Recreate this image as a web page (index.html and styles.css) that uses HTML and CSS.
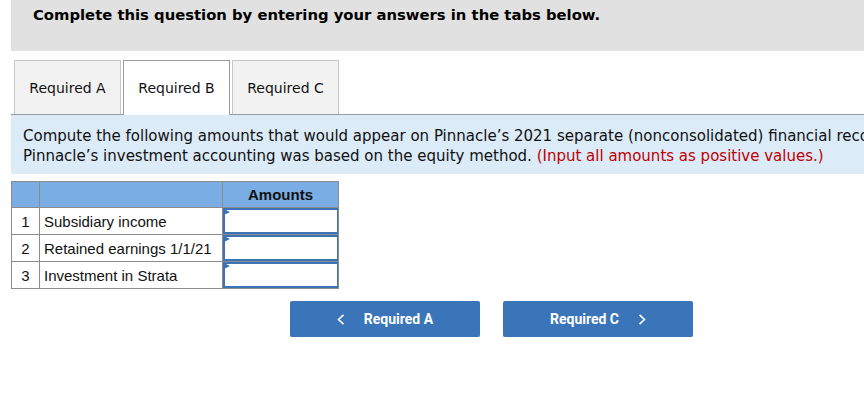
FILE: index.html
```html
<!DOCTYPE html>
<html>
<head>
<meta charset="utf-8">
<link rel="stylesheet" href="styles.css">
</head>
<body>
<div class="page">
  <div class="banner">Complete this question by entering your answers in the tabs below.</div>
  <div class="tabs">
    <div class="tab">Required A</div>
    <div class="tab active">Required B</div>
    <div class="tab">Required C</div>
  </div>
  <div class="info">
    Compute the following amounts that would appear on Pinnacle’s 2021 separate (nonconsolidated) financial records if<br>
    Pinnacle’s investment accounting was based on the equity method. <span class="red">(Input all amounts as positive values.)</span>
  </div>
  <table class="grid">
    <tr class="head">
      <th class="num"></th>
      <th class="label"></th>
      <th class="amt">Amounts</th>
    </tr>
    <tr>
      <td class="num">1</td>
      <td class="label">Subsidiary income</td>
      <td class="amt"><div class="input"></div></td>
    </tr>
    <tr>
      <td class="num">2</td>
      <td class="label">Retained earnings 1/1/21</td>
      <td class="amt"><div class="input"></div></td>
    </tr>
    <tr>
      <td class="num">3</td>
      <td class="label">Investment in Strata</td>
      <td class="amt"><div class="input"></div></td>
    </tr>
  </table>
  <div class="nav">
    <div class="btn prev">
      <svg class="chev" width="8" height="11" viewBox="0 0 8 11"><polyline points="6.5,0.8 1.5,5.5 6.5,10.2" fill="none" stroke="#fff" stroke-width="1.6"/></svg>
      <span>Required A</span>
    </div>
    <div class="btn next">
      <span>Required C</span>
      <svg class="chev" width="8" height="11" viewBox="0 0 8 11"><polyline points="1.5,0.8 6.5,5.5 1.5,10.2" fill="none" stroke="#fff" stroke-width="1.6"/></svg>
    </div>
  </div>
</div>
</body>
</html>
```

FILE: styles.css
```css
html, body {
  margin: 0;
  padding: 0;
  background: #fff;
  overflow: hidden;
}
.page {
  width: 1100px;
  padding-left: 11px;
  font-family: "DejaVu Sans", Verdana, sans-serif;
  color: #000;
}
.banner {
  height: 51px;
  box-sizing: border-box;
  background: #e1e1e1;
  padding: 5px 0 0 22px;
  font-weight: bold;
  font-size: 14.8px;
  line-height: 20px;
}
.tabs {
  display: flex;
  gap: 2px;
  margin-top: 9px;
  padding-left: 3px;
  border-bottom: 1px solid #9a9a9a;
  height: 54px;
}
.tab {
  width: 107px;
  height: 54px;
  box-sizing: border-box;
  border: 1px solid #c8c8c8;
  border-bottom: none;
  background: #f2f2f2;
  display: flex;
  align-items: center;
  justify-content: center;
  font-size: 14px;
  color: #111;
}
.tab.active {
  background: #fff;
  border-color: #9a9a9a;
  height: 55px;
  position: relative;
  z-index: 1;
}
.info {
  background: #dbebf8;
  padding: 11px 0 8px 12px;
  font-size: 15px;
  line-height: 20px;
  color: #111;
  white-space: nowrap;
}
.red { color: #c00000; }
.grid {
  margin-top: 7px;
  border-collapse: collapse;
  font-family: "Liberation Sans", Arial, sans-serif;
  font-size: 15px;
  color: #111;
}
.grid td, .grid th {
  border: 1px solid #8c8c8c;
  height: 26px;
  padding: 0;
}
.grid .head th {
  background: #79ade3;
  font-weight: bold;
  text-align: center;
  height: 25px;
}
.grid .num { width: 27px; text-align: center; }
.grid .label { width: 178px; padding-left: 4px; text-align: left; }
.grid .amt { width: 115px; }
.grid td.amt { position: relative; }
.input {
  position: absolute;
  inset: 0;
  border: 2px solid #3b74b6;
  border-right-width: 1px;
  background: #fff;
}
.input::before {
  content: "";
  position: absolute;
  left: -1px;
  top: -1px;
  border-left: 6px solid #3b74b6;
  border-top: 3px solid transparent;
  border-bottom: 3px solid transparent;
}
.nav {
  display: flex;
  gap: 23px;
  margin-top: 12px;
  padding-left: 279px;
}
.btn {
  width: 190px;
  height: 36px;
  box-sizing: border-box;
  background: #3a75b9;
  border-radius: 2px;
  box-shadow: 0 1px 1px rgba(0,0,0,0.15);
  color: #fff;
  font-family: Roboto, "Noto Sans", sans-serif;
  font-weight: bold;
  font-size: 14px;
  display: flex;
  align-items: center;
  justify-content: center;
  gap: 19px;
}
.chev { display: block; }
```
